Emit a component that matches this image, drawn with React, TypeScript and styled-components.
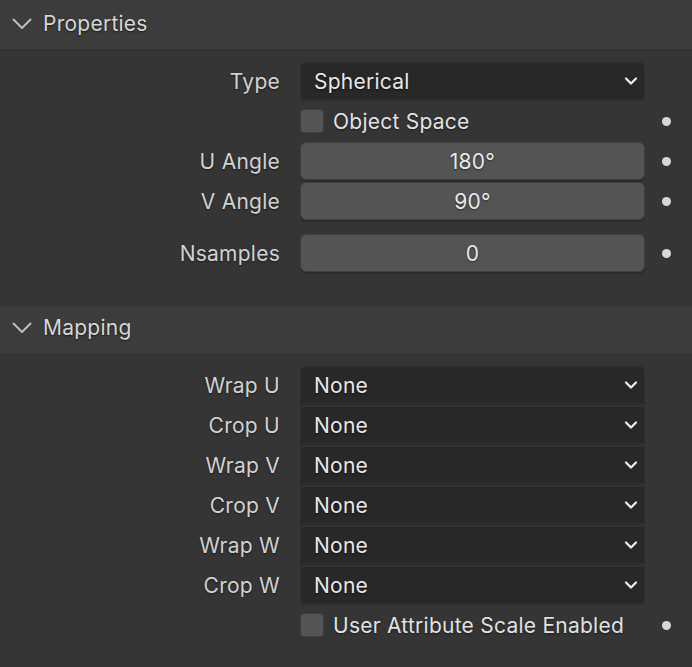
import React from "react";
import styled, { createGlobalStyle } from "styled-components";

const Global = createGlobalStyle`
  html, body { margin: 0; padding: 0; background: #353535; }
  body { font-family: Inter, "Noto Sans", "DejaVu Sans", sans-serif; letter-spacing: 0.25px; }
  #root { width: 692px; height: 667px; overflow: hidden; background: #353535; }
`;

const Panel = styled.section`
  display: flex;
  flex-direction: column;
`;

const Header = styled.div<{ $height: number; $lift: number }>`
  height: ${(p) => p.$height}px;
  box-sizing: border-box;
  display: flex;
  align-items: center;
  gap: 11px;
  padding-left: 12px;
  padding-bottom: ${(p) => p.$lift}px;
  background: #3c3c3c;
  border-bottom: 1px solid #313131;
  color: #d6d6d6;
  font-size: 21px;
  text-shadow: 0 1px 2px rgba(0, 0, 0, 0.6);
`;

const Body = styled.div<{ $top: number; $bottom: number }>`
  display: flex;
  flex-direction: column;
  gap: 2px;
  padding-top: ${(p) => p.$top}px;
  padding-bottom: ${(p) => p.$bottom}px;
  background: #353535;
`;

const Row = styled.div<{ $space?: number }>`
  display: grid;
  grid-template-columns: 300px 345px 1fr;
  height: 38px;
  align-items: center;
  margin-top: ${(p) => p.$space ?? 0}px;
`;

const Label = styled.div`
  text-align: right;
  padding-right: 20px;
  color: #d2d2d2;
  font-size: 21px;
  text-shadow: 0 1px 2px rgba(0, 0, 0, 0.5);
`;

type Pos = "single" | "first" | "mid" | "last";
const radius = (p: Pos) =>
  p === "single"
    ? "6px"
    : p === "first"
    ? "6px 6px 0 0"
    : p === "last"
    ? "0 0 6px 6px"
    : "0";

const Select = styled.div<{ $pos: Pos }>`
  height: 38px;
  box-sizing: border-box;
  display: flex;
  align-items: center;
  justify-content: space-between;
  padding: 0 6px 0 13px;
  background: #282828;
  border: 1px solid #2f2f2f;
  border-radius: ${(p) => radius(p.$pos)};
  box-shadow: 0 1px 0 rgba(0, 0, 0, 0.2);
  color: #e8e8e8;
  font-size: 21px;
  text-shadow: 0 1px 2px rgba(0, 0, 0, 0.7);
`;

const NumField = styled.div`
  height: 38px;
  box-sizing: border-box;
  display: flex;
  align-items: center;
  justify-content: center;
  background: #545454;
  border: 1px solid #3f3f3f;
  border-radius: 6px;
  box-shadow: 0 2px 0 rgba(0, 0, 0, 0.18);
  color: #e8e8e8;
  font-size: 21px;
  text-shadow: 0 1px 2px rgba(0, 0, 0, 0.5);
`;

const CheckWrap = styled.label`
  display: flex;
  align-items: center;
  gap: 9px;
  color: #e2e2e2;
  font-size: 21px;
  text-shadow: 0 1px 2px rgba(0, 0, 0, 0.5);
  white-space: nowrap;
`;

const Box = styled.span`
  width: 24px;
  height: 24px;
  box-sizing: border-box;
  border-radius: 4px;
  background: #545454;
  border: 1px solid #3e3e3e;
`;

const Deco = styled.div`
  display: flex;
  align-items: center;
  padding-left: 17px;
`;

const Dot = styled.span`
  width: 9px;
  height: 9px;
  border-radius: 50%;
  background: #d8d8d8;
`;

const HeaderChevron = () => (
  <svg width="20" height="12" viewBox="0 0 20 12">
    <path d="M1.5 1.5 L10 10 L18.5 1.5" fill="none" stroke="#bdbdbd" strokeWidth="2" strokeLinecap="round" strokeLinejoin="round" />
  </svg>
);

const SmallChevron = () => (
  <svg width="14" height="10" viewBox="0 0 14 10">
    <path d="M2 2.5 L7 7.5 L12 2.5" fill="none" stroke="#f0f0f0" strokeWidth="2.2" strokeLinecap="round" strokeLinejoin="round" />
  </svg>
);

const SelectRow = ({ label, value, pos }: { label: string; value: string; pos: Pos }) => (
  <Row>
    <Label>{label}</Label>
    <Select $pos={pos}>
      <span>{value}</span>
      <SmallChevron />
    </Select>
    <div />
  </Row>
);

const NumRow = ({ label, value, space }: { label: string; value: string; space?: number }) => (
  <Row $space={space}>
    <Label>{label}</Label>
    <NumField>{value}</NumField>
    <Deco>
      <Dot />
    </Deco>
  </Row>
);

const CheckRow = ({ label }: { label: string }) => (
  <Row>
    <div />
    <CheckWrap>
      <Box />
      {label}
    </CheckWrap>
    <Deco>
      <Dot />
    </Deco>
  </Row>
);

const mapping = [
  ["Wrap U", "None"],
  ["Crop U", "None"],
  ["Wrap V", "None"],
  ["Crop V", "None"],
  ["Wrap W", "None"],
  ["Crop W", "None"],
];

export default function App() {
  return (
    <>
      <Global />
      <Panel>
        <Header $height={50} $lift={2}>
          <HeaderChevron />
          <span>Properties</span>
        </Header>
        <Body $top={12} $bottom={34}>
          <SelectRow label="Type" value="Spherical" pos="single" />
          <CheckRow label="Object Space" />
          <NumRow label="U Angle" value="180°" />
          <NumRow label="V Angle" value="90°" />
          <NumRow label="Nsamples" value="0" space={12} />
        </Body>
      </Panel>
      <Panel>
        <Header $height={49} $lift={5}>
          <HeaderChevron />
          <span>Mapping</span>
        </Header>
        <Body $top={11} $bottom={30}>
          {mapping.map(([l, v], i) => (
            <SelectRow
              key={l}
              label={l}
              value={v}
              pos={i === 0 ? "first" : i === mapping.length - 1 ? "last" : "mid"}
            />
          ))}
          <CheckRow label="User Attribute Scale Enabled" />
        </Body>
      </Panel>
    </>
  );
}
